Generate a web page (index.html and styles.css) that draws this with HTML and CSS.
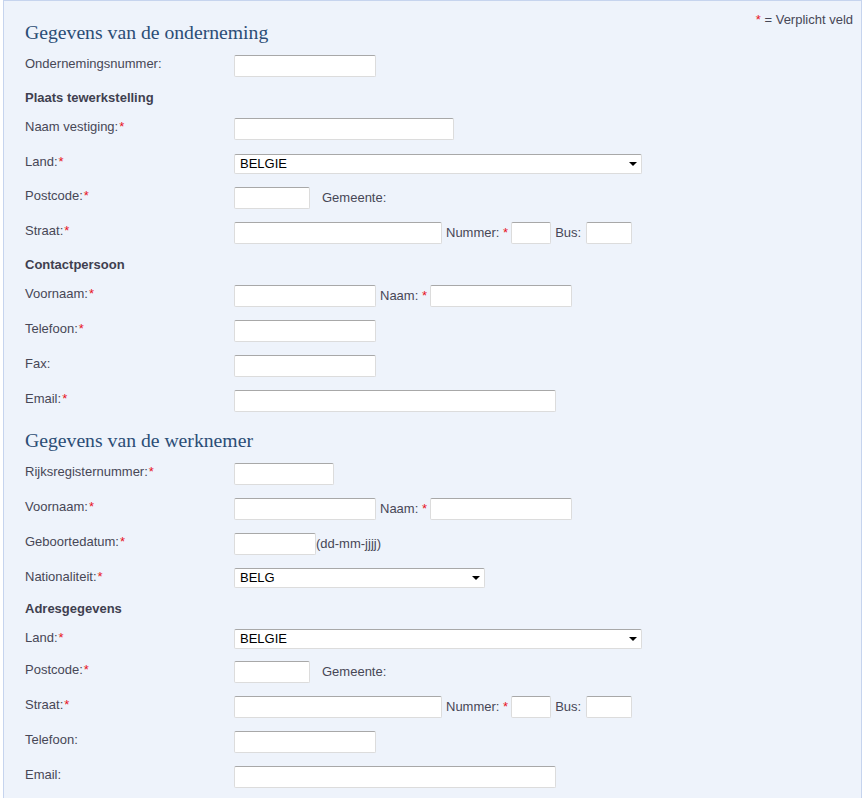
FILE: index.html
```html
<!DOCTYPE html>
<html lang="nl">
<head>
<meta charset="utf-8">
<title>Gegevens</title>
<link rel="stylesheet" href="styles.css">
</head>
<body>
<div class="page">
  <form class="panel">
    <div class="legend"><span class="req">*</span> = Verplicht veld</div>

    <h2 class="section">Gegevens van de onderneming</h2>
    <div class="row">
      <label class="lbl">Ondernemingsnummer:</label>
      <div class="fields"><input class="in w142" type="text"></div>
    </div>

    <h3 class="sub">Plaats tewerkstelling</h3>
    <div class="row">
      <label class="lbl">Naam vestiging:<span class="req mark">*</span></label>
      <div class="fields"><input class="in w220" type="text"></div>
    </div>
    <div class="row srow">
      <label class="lbl">Land:<span class="req mark">*</span></label>
      <div class="fields"><span class="sel w408"><select><option>BELGIE</option></select></span></div>
    </div>
    <div class="row">
      <label class="lbl">Postcode:<span class="req mark">*</span></label>
      <div class="fields"><input class="in w76" type="text"><span class="txt gap12">Gemeente:</span></div>
    </div>
    <div class="row">
      <label class="lbl">Straat:<span class="req mark">*</span></label>
      <div class="fields"><input class="in w208" type="text"><span class="txt">Nummer: <span class="req">*</span></span><input class="in w40" type="text"><span class="txt bus">Bus:</span><input class="in w46" type="text"></div>
    </div>

    <h3 class="sub">Contactpersoon</h3>
    <div class="row">
      <label class="lbl">Voornaam:<span class="req mark">*</span></label>
      <div class="fields"><input class="in w142" type="text"><span class="txt">Naam: <span class="req">*</span></span><input class="in w142" type="text"></div>
    </div>
    <div class="row">
      <label class="lbl">Telefoon:<span class="req mark">*</span></label>
      <div class="fields"><input class="in w142" type="text"></div>
    </div>
    <div class="row">
      <label class="lbl">Fax:</label>
      <div class="fields"><input class="in w142" type="text"></div>
    </div>
    <div class="row">
      <label class="lbl">Email:<span class="req mark">*</span></label>
      <div class="fields"><input class="in w322" type="text"></div>
    </div>

    <h2 class="section">Gegevens van de werknemer</h2>
    <div class="row">
      <label class="lbl">Rijksregisternummer:<span class="req mark">*</span></label>
      <div class="fields"><input class="in w100" type="text"></div>
    </div>
    <div class="row">
      <label class="lbl">Voornaam:<span class="req mark">*</span></label>
      <div class="fields"><input class="in w142" type="text"><span class="txt">Naam: <span class="req">*</span></span><input class="in w142" type="text"></div>
    </div>
    <div class="row">
      <label class="lbl">Geboortedatum:<span class="req mark">*</span></label>
      <div class="fields"><input class="in w82" type="text"><span class="txt nogap">(dd-mm-jjjj)</span></div>
    </div>
    <div class="row srow srow-flat">
      <label class="lbl">Nationaliteit:<span class="req mark">*</span></label>
      <div class="fields"><span class="sel w251"><select><option>BELG</option></select></span></div>
    </div>

    <h3 class="sub">Adresgegevens</h3>
    <div class="row srow srow-short">
      <label class="lbl">Land:<span class="req mark">*</span></label>
      <div class="fields"><span class="sel w408"><select><option>BELGIE</option></select></span></div>
    </div>
    <div class="row">
      <label class="lbl">Postcode:<span class="req mark">*</span></label>
      <div class="fields"><input class="in w76" type="text"><span class="txt gap12">Gemeente:</span></div>
    </div>
    <div class="row">
      <label class="lbl">Straat:<span class="req mark">*</span></label>
      <div class="fields"><input class="in w208" type="text"><span class="txt">Nummer: <span class="req">*</span></span><input class="in w40" type="text"><span class="txt bus">Bus:</span><input class="in w46" type="text"></div>
    </div>
    <div class="row">
      <label class="lbl">Telefoon:</label>
      <div class="fields"><input class="in w142" type="text"></div>
    </div>
    <div class="row">
      <label class="lbl">Email:</label>
      <div class="fields"><input class="in w322" type="text"></div>
    </div>
  </form>
</div>
</body>
</html>
```

FILE: styles.css
```css
html, body {
  margin: 0;
  padding: 0;
  background: #ffffff;
}

body {
  font-family: "Liberation Sans", Arial, sans-serif;
  font-size: 13px;
  color: #474756;
}

.page {
  padding-left: 3px;
  width: 859px;
}

.panel {
  position: relative;
  display: block;
  background: #eef3fb;
  border: 1px solid #c6d4ee;
  border-bottom: none;
  padding: 16px 0 40px 21px;
  min-height: 780px;
  box-sizing: border-box;
}

.legend {
  position: absolute;
  top: 11px;
  right: 8px;
  line-height: 16px;
  font-size: 13px;
  color: #474756;
}

.req {
  color: #e8141e;
}

.mark {
  margin-left: 1px;
}

.section {
  margin: 0;
  padding: 3px 0 11px 0;
  font-family: Georgia, "Liberation Serif", serif;
  font-weight: normal;
  font-size: 19.7px;
  line-height: 24px;
  color: #2b4d76;
}

.sub {
  margin: 0;
  padding: 0 0 13px 0;
  font-size: 13px;
  line-height: 15px;
  font-weight: bold;
  color: #3f3f4f;
}

.row {
  display: flex;
  align-items: flex-start;
  height: 35px;
}

.srow {
  height: 34px;
}

.srow-flat {
  height: 33px;
}

.srow-short {
  height: 32px;
}

.lbl {
  flex: 0 0 209px;
  line-height: 17px;
  white-space: nowrap;
}

.fields {
  display: flex;
  align-items: center;
}

.srow .fields {
  padding-top: 1px;
}

.srow-flat .fields,
.srow-short .fields {
  padding-top: 0;
}

.in {
  box-sizing: border-box;
  height: 22px;
  margin: 0;
  padding: 0 4px;
  background: #ffffff;
  border: 1px solid #dcdcdc;
  border-top-color: #a8a8a8;
  border-radius: 2px;
  font-family: "Liberation Sans", Arial, sans-serif;
  font-size: 13px;
  outline: none;
}

.txt {
  margin: 0 3px 0 4px;
  white-space: nowrap;
  line-height: 16px;
}

.txt.bus {
  margin-right: 5px;
}

.txt.gap12 {
  margin-left: 12px;
}

.txt.nogap {
  margin-left: 0;
}

.w40 { width: 40px; }
.w46 { width: 46px; }
.w76 { width: 76px; }
.w82 { width: 82px; }
.w100 { width: 100px; }
.w142 { width: 142px; }
.w208 { width: 208px; }
.w220 { width: 220px; }
.w251 { width: 251px; }
.w322 { width: 322px; }
.w408 { width: 408px; }

.sel {
  position: relative;
  display: block;
  height: 20px;
}

.sel select {
  appearance: none;
  -webkit-appearance: none;
  box-sizing: border-box;
  width: 100%;
  height: 20px;
  margin: 0;
  padding: 0 20px 0 5px;
  background: #ffffff;
  border: 1px solid #dcdcdc;
  border-top-color: #a8a8a8;
  border-radius: 2px;
  font-family: "Liberation Sans", Arial, sans-serif;
  font-size: 13px;
  color: #000000;
  line-height: 18px;
  outline: none;
}

.sel::after {
  content: "";
  position: absolute;
  right: 5px;
  top: 8px;
  width: 0;
  height: 0;
  border-left: 4px solid transparent;
  border-right: 4px solid transparent;
  border-top: 4px solid #000000;
  pointer-events: none;
}
```
